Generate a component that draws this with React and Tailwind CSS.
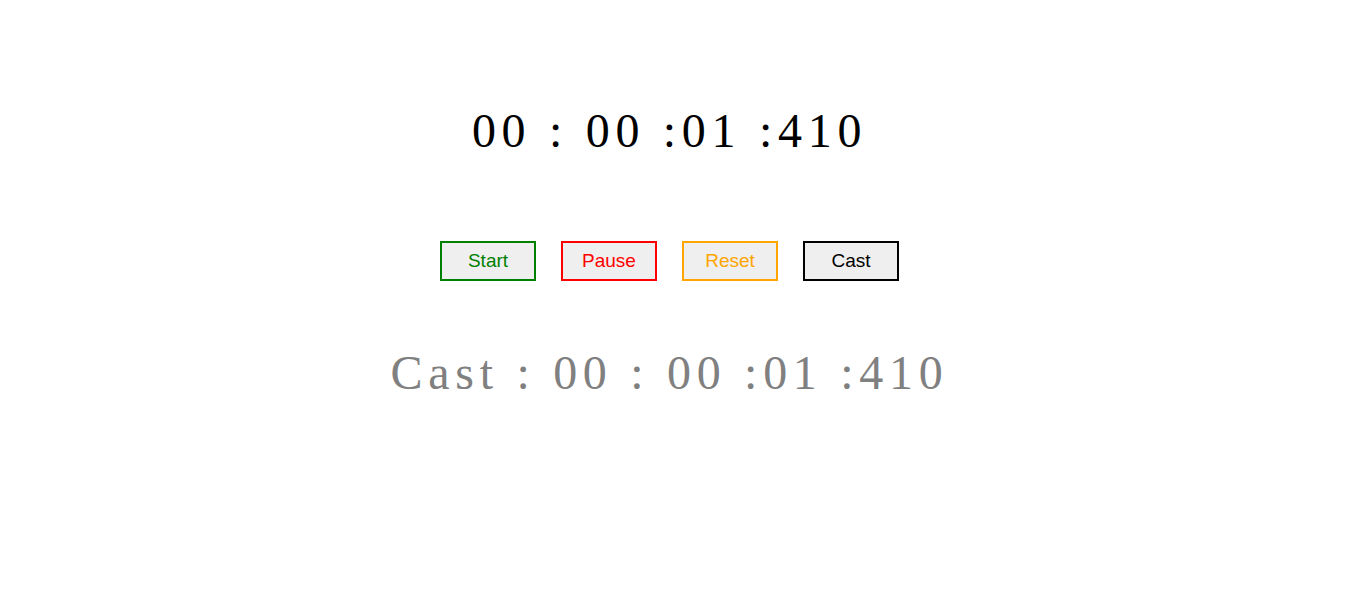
export default function App() {
  const time = '00 : 00 :01 :410'
  const buttons = [
    { label: 'Start', cls: 'border-[#008000] text-[#008000]' },
    { label: 'Pause', cls: 'border-[#ff0000] text-[#ff0000]' },
    { label: 'Reset', cls: 'border-[#ffa500] text-[#ffa500]' },
    { label: 'Cast', cls: 'border-black text-black' },
  ]

  return (
    <div className="min-h-screen bg-white flex flex-col items-center pt-[103px] pr-[8px]">
      <h1 className="font-['Liberation_Serif',serif] text-[48px] leading-[56px] tracking-[5.7px] text-black">
        {time}
      </h1>

      <div className="flex gap-[25px] mt-[82px] font-['Liberation_Sans',Arial,sans-serif]">
        {buttons.map(b => (
          <button
            key={b.label}
            className={`w-[96px] h-[40px] border-2 bg-[#efefef] text-[19px] ${b.cls}`}
          >
            {b.label}
          </button>
        ))}
      </div>

      <p className="font-['Liberation_Serif',serif] text-[48px] leading-[56px] tracking-[5.7px] text-[#808080] mt-[64px]">
        Cast : {time}
      </p>
    </div>
  )
}
